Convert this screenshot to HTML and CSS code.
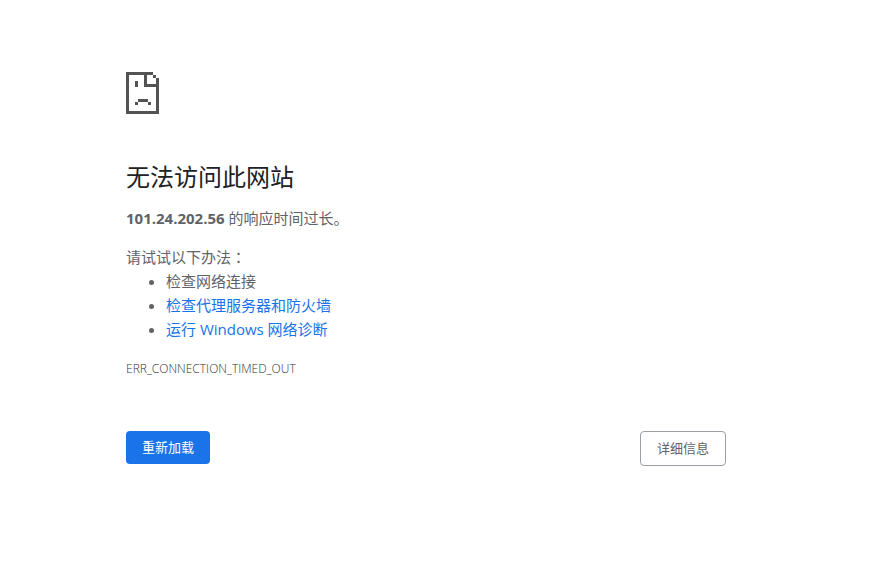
FILE: index.html
```html
<!DOCTYPE html>
<html lang="zh-CN">

<head>
    <meta charset="utf-8">
    <meta name="viewport" content="width=device-width, initial-scale=1.0">
    <title>101.24.202.56</title>
    <link rel="stylesheet" href="styles.css">
</head>

<body>
    <main class="content">
        <svg class="icon" viewBox="0 0 33 42" shape-rendering="crispEdges" aria-hidden="true">
            <path d="M0 0H27V3H30V6H33V42H0ZM3 3V39H30V15H18V3ZM21 3V12H30V6H27V3Z" fill-rule="evenodd" />
            <path d="M9 9h3v6H9zM12 27h10v3H12zM9 30h3v3H9zM22 30h3v3h-3z" />
        </svg>
        <h1>无法访问此网站</h1>
        <p><strong>101.24.202.56</strong> 的响应时间过长。</p>
        <div class="suggestions">
            <p>请试试以下办法<span class="colon" lang="zh-TW">：</span></p>
            <ul>
                <li>检查网络连接</li>
                <li><a href="#">检查代理服务器和防火墙</a></li>
                <li><a href="#">运行 Windows 网络诊断</a></li>
            </ul>
        </div>
        <div class="error-code">ERR_CONNECTION_TIMED_OUT</div>
        <div class="buttons">
            <button class="reload">重新加载</button>
            <button class="details">详细信息</button>
        </div>
    </main>
</body>

</html>
```
FILE: styles.css
```css
body {
    margin: 0;
    padding-right: 18px;
    background-color: white;
    color: #5f6368;
    font-family: "Open Sans", "Noto Sans CJK SC", sans-serif;
    font-size: 15px;
    line-height: 24px;
}

.content {
    max-width: 600px;
    margin: 72px auto 0;
}

.icon {
    display: block;
    width: 33px;
    height: 42px;
    fill: #535353;
}

h1 {
    margin: 48px 0 14px;
    color: #202124;
    font-size: 24px;
    font-weight: 400;
    line-height: 30px;
}

p {
    margin: 0;
}

.suggestions {
    margin-top: 15px;
}

.colon {
    font-family: "Noto Sans CJK TC", sans-serif;
}

ul {
    margin: 0;
    padding-left: 40px;
}

a {
    color: #1a73e8;
    text-decoration: none;
}

.error-code {
    margin-top: 16px;
    color: #303336;
    font-size: 12px;
    font-weight: 300;
}

.buttons {
    display: flex;
    justify-content: space-between;
    align-items: flex-start;
    margin-top: 50px;
}

button {
    padding: 8px 16px;
    border: 0;
    border-radius: 4px;
    font-family: inherit;
    font-size: 13px;
    line-height: 17px;
    cursor: pointer;
}

.reload {
    background-color: #1a73e8;
    color: white;
}

.details {
    border: 1px solid #9aa0a6;
    background-color: white;
    color: #5f6368;
}
```
